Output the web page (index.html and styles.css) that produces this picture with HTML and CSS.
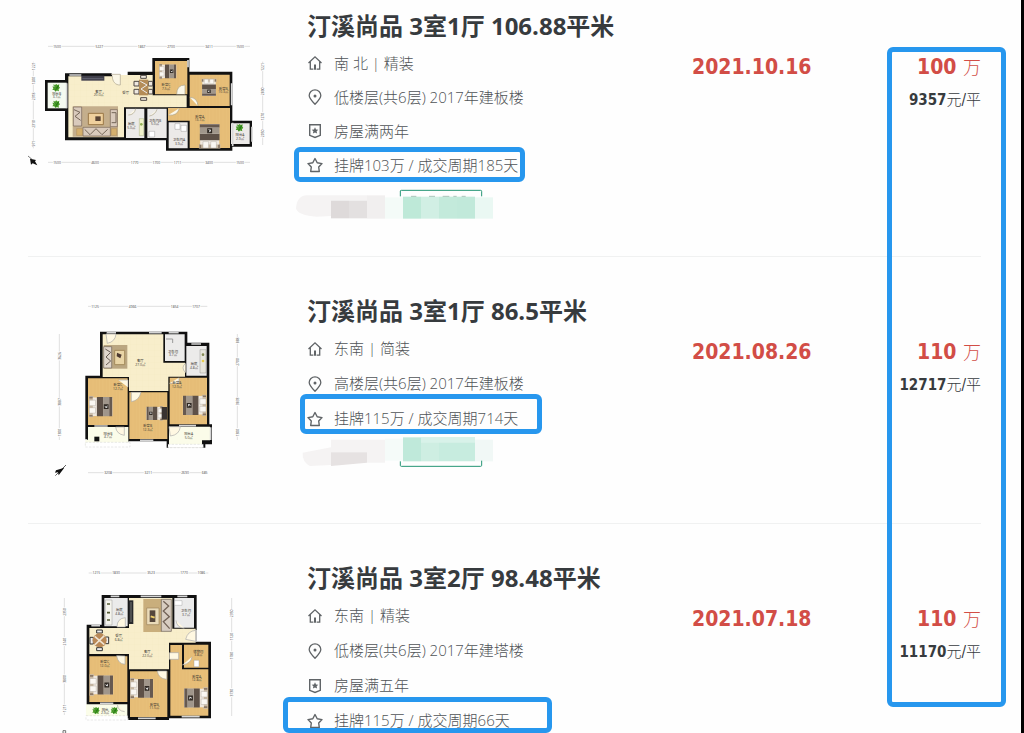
FILE: index.html
```html
<!DOCTYPE html>
<html lang="zh-CN">
<head>
<meta charset="utf-8">
<meta name="viewport" content="width=device-width, initial-scale=1">
<title>汀溪尚品 成交记录</title>
<link rel="stylesheet" href="styles.css">
</head>
<body>
<svg class="defs" aria-hidden="true">
  <defs>
    <pattern id="wood" width="10" height="24" patternUnits="userSpaceOnUse"><rect width="10" height="24" fill="#e8c07a"/><path d="M0 0V24M5 0V24" stroke="#dcb066" stroke-width="1"/></pattern>
    <pattern id="tile" width="18" height="18" patternUnits="userSpaceOnUse"><rect width="18" height="18" fill="#f8eecb"/><path d="M0 0H18M0 0V18" stroke="#f1e4bc" stroke-width="1"/></pattern>
    <symbol id="i-home" viewBox="0 0 16 16"><path d="M1.500 8 8 1.800 14.500 8M3.300 6.800V14.200H6.400M12.700 6.800V14.200H9.600" fill="none" stroke="currentColor" stroke-width="1.300"/><path d="M7 9.500H9V14.800H7Z" fill="currentColor"/></symbol>
    <symbol id="i-pin" viewBox="0 0 16 16"><path d="M8 15.300C4.500 11.700 2.200 9.300 2.200 6.500A5.800 5.700 0 0 1 13.800 6.500C13.800 9.300 11.500 11.700 8 15.300Z" fill="none" stroke="currentColor" stroke-width="1.300"/><circle cx="8" cy="7" r="1.500" fill="currentColor"/></symbol>
    <symbol id="i-badge" viewBox="0 0 16 16"><path d="M2.700 1.700H13.300V12.300L8 14.500 2.700 12.300Z" fill="none" stroke="currentColor" stroke-width="1.400"/><path d="m8 4.300 1 2.200 2.300.200-1.700 1.600.5 2.300L8 9.400l-2.100 1.200.5-2.300-1.700-1.600L7 6.500Z" fill="currentColor"/></symbol>
    <symbol id="i-star" viewBox="0 0 16 16"><path d="M8 1.500 10.200 5.700 15 6.600 11.700 10 12.300 14.500H3.700L4.300 10 1 6.600 5.800 5.700Z" fill="none" stroke="currentColor" stroke-width="1.400" stroke-linejoin="round"/></symbol>
    <symbol id="bed" viewBox="0 0 70 62"><path d="M0 0H14V62H0Z" fill="#cbbba5"/><path d="M2 2h10v5H2zM2 55h10v5H2z" fill="#8b7866"/><path d="M12 4H70V58H12Z" fill="#eee7de"/><path d="M2 12h18v16H2zM2 34h18v16H2z" fill="#faf7f2" stroke="#9e948b"/><path d="M24 3H42V59H24Z" fill="#5e5148"/><path d="M42 3H60V59H42Z" fill="#a0968b"/><path d="M60 3h9v56h-9z" fill="#665950"/><path d="M44 24h14v14H44z" fill="#2f2823"/><path d="m46 28 5 3 4-5-1 9-5-1z" fill="#ddd"/></symbol>
    <symbol id="plant" viewBox="0 0 24 24"><path d="M12 12 3 2l6 2 3-3 4 3 5-2-1 6 3 4-4 4 1 6-6-2-4 3-3-5-6 0 3-5-3-5 5 0z" fill="#499b27"/><path d="m5 5 8 8 5-7-4 9-6 4" stroke="#1d6f14" stroke-width="2" fill="none"/></symbol>
    <symbol id="north" viewBox="0 0 40 40"><path d="m12 10 18 7-10 4-3 9-9-15z" fill="#111" transform="rotate(45 20 20)"/><path d="m3 3 27 26" stroke="#111" stroke-width="2"/></symbol>
  </defs>
</svg>

<main class="page">
  <ul class="list">

    <li class="item">
      <svg class="plan" viewBox="24 -75 720 600" role="img" aria-label="户型图 3室1厅">
        <path d="M135 130H275V135H323V125H397V84H508V125H637V272H696V350H637V362H438V331H135V243H75V150H135Z" fill="#111"/>
        <path d="M83 158H140V235H83Z" fill="#f5faf0"/>
        <path d="M145 139H300V135H398V196H500V232H312V322H145Z" fill="url(#tile)"/>
        <path d="M405 93H502V193H405ZM509 134H629V228H509ZM509 234H630V354H509ZM444 234H509V272H444Z" fill="url(#wood)"/>
        <path d="M318 236H373V324H318ZM382 236H440V324H382ZM446 277H503V355H446ZM633 280H689V342H633Z" fill="#eceae8"/>
        <path d="M140 160v75M148 135H184M635 160V226M696 290V335M504 90v22M638 278v70" stroke="#d9d9d9" stroke-width="5"/>
        <path d="M184 137H253V152H184Z" fill="#41404b"/><path d="M187 146H250" stroke="#777887" stroke-width="2"/>
        <path d="M275 133H301V165C286 166 277 154 277 139M470 193Q470 165 495 165V193M509 202Q532 202 534 228M445 255Q472 259 478 235M325 255Q343 255 347 236M388 258Q405 255 411 238" fill="#fbf7e8" stroke="#aaa38c" stroke-width="2"/>
        <path d="M158 229H294V320H158Z" fill="#c4ae8c"/><path d="M160 231h25v57h-25zM271 239h21v51h-21zM189 292h82v26h-82z" fill="#d9cabc" stroke="#726256" stroke-width="2"/>
        <path d="m162 239 18 8-15 12 17 12M275 248h13v30h-13M194 298l16 16 18-18 18 18 17-16" fill="none" stroke="#756658" stroke-width="3"/>
        <path d="M205 250H250V284H205Z" fill="#efd09d" stroke="#997747" stroke-width="3"/><path d="M226 259h16v14h-16z" fill="#594435"/><path d="M170 296h17v20h-17zM274 296h16v20h-16z" fill="#d5b06e" stroke="#a47c41"/>
        <path d="M342 154h15v14h-15zM342 178h15v14h-15zM385 154h13v14h-13zM385 178h13v14h-13zM362 136h17v9h-17zM362 203h18v8h-18z" fill="#eee8df" stroke="#4e4743" stroke-width="3"/>
        <path d="M357 149h28v47h-28z" fill="#b48c57"/><path d="m361 154 20 11-18 12 18 12" stroke="#eee" stroke-width="3" fill="none"/>
        <use href="#bed" x="405" y="101" width="76" height="46"/>
        <use href="#bed" width="76" height="46" transform="translate(590 134) rotate(90)"/>
        <use href="#bed" width="74" height="66" transform="translate(536 356) rotate(-90)"/>
        <path d="M358 266h13v51h-13z" fill="#f1f2cb" stroke="#85965d"/><circle cx="364" cy="283" r="4" fill="#92b154"/><path d="M387 304h17v17h-17zM465 281h15v17h-15zM483 286h17v18h-17z" fill="#fff" stroke="#777"/>
        <use href="#plant" x="96" y="161" width="25" height="25"/><use href="#plant" x="96" y="210" width="25" height="25"/><use href="#plant" x="646" y="281" width="25" height="25"/>
        <g class="room"><text x="236" y="188">客厅</text><text x="236" y="199">20.0㎡</text><text x="317" y="192">餐厅</text><text x="110" y="195">阳台B</text><text x="110" y="205">3.7㎡</text><text x="438" y="169">卧室C</text><text x="438" y="179">7.5㎡</text><text x="610" y="180">卧室B</text><text x="610" y="190">10.3㎡</text><text x="539" y="263">卧室A</text><text x="539" y="273">13.7㎡</text><text x="334" y="285">厨房</text><text x="334" y="296">5.0㎡</text><text x="405" y="275">卫生间B</text><text x="405" y="286">5.0㎡</text><text x="477" y="334">卫生间A</text><text x="477" y="345">3.9㎡</text><text x="660" y="318">阳台A</text><text x="660" y="329">2.9㎡</text></g>
        <path class="rule" d="M84 49H690M84 397H690M40 95V355M728 95V345"/>
        <g class="dim"><text x="111" y="53">1500</text><text x="238" y="53">5227</text><text x="365" y="53">1867</text><text x="453" y="53">2700</text><text x="567" y="53">3411</text><text x="660" y="53">1500</text><text x="111" y="401">1500</text><text x="225" y="401">4600</text><text x="344" y="401">1770</text><text x="409" y="401">1700</text><text x="473" y="401">1711</text><text x="567" y="401">3400</text><text x="660" y="401">1500</text><text transform="translate(44 109) rotate(-90)">1221</text><text transform="translate(44 152) rotate(-90)">1200</text><text transform="translate(44 199) rotate(-90)">2318</text><text transform="translate(44 282) rotate(-90)">2310</text><text transform="translate(44 341) rotate(-90)">971</text><text transform="translate(732 111) rotate(-90)">1221</text><text transform="translate(732 184) rotate(-90)">2890</text><text transform="translate(732 260) rotate(-90)">1270</text><text transform="translate(732 310) rotate(-90)">2050</text></g>
        <path d="m30 386 18 4-3 4 7 12-14-6-5 4z" fill="#111"/><path d="m24 378 12 10" stroke="#333" stroke-width="2"/>
      </svg>
      <div class="info">
        <h2 class="title">汀溪尚品 3室1厅 106.88平米</h2>
        <ul class="facts">
          <li class="fact"><svg class="icon"><use href="#i-home"/></svg>南 北 | 精装</li>
          <li class="fact"><svg class="icon"><use href="#i-pin"/></svg>低楼层(共6层) 2017年建板楼</li>
          <li class="fact"><svg class="icon"><use href="#i-badge"/></svg>房屋满两年</li>
          <li class="fact"><svg class="icon"><use href="#i-star"/></svg>挂牌103万 / 成交周期185天<span class="mark mark-a"></span></li>
        </ul>
        <svg class="tags" viewBox="48 228 600 108" aria-hidden="true">
          <path d="M361 259V243Q361 241 364 241H602Q605 241 605 244V259" fill="none" stroke="#249574" stroke-width="3"/>
          <path d="M80 256H262V272H153V318L110 320Q55 316 48 296Q50 258 80 256Z" fill="#f5f3f3"/><path d="M153 272H207V325H153Z" fill="#dedada"/><path d="M207 272H261V325H207Z" fill="#e3e0e0"/><path d="M261 256H315V326H261Z" fill="#f1efef"/><path d="M315 262H369V326H315Z" fill="#f4fbf8"/><path d="M369 260H423V326H369Z" fill="#bee9d8"/><path d="M423 260H477V326H423Z" fill="#d1efe4"/><path d="M477 260H531V326H477Z" fill="#c3eadb"/><path d="M531 260H585V326H531Z" fill="#c1e9da"/><path d="M585 262H639V326H585Z" fill="#eaf8f3"/>
          <path d="M393 259h16M447 259h18M488 259h20M520 259h10M545 259h12" stroke="#86ab9d" stroke-width="2"/>
        </svg>
      </div>
      <div class="deal">
        <time class="date" datetime="2021-10-16">2021.10.16</time>
        <div class="price"><div class="total"><strong>100</strong> <span>万</span></div><div class="unit"><strong>9357</strong>元/平</div></div>
      </div>
    </li>

    <li class="item">
      <svg class="plan" viewBox="-36 0 720 600" role="img" aria-label="户型图 3室1厅">
        <path d="M180 125H442V158H508V403H516V463H496V473H380V454H265V461H142V448H136V257H180Z" fill="#111"/>
        <path d="M188 133H370V218H435V260H385V303H267V261H188Z" fill="url(#tile)"/>
        <path d="M144 265H263V405H144ZM268 307H382V447H268ZM389 263H501V403H389Z" fill="url(#wood)"/>
        <path d="M375 133H434V213H375ZM439 168H500V257H439Z" fill="#ecebea"/><path d="M144 411H265V471H136V450H144ZM387 410H510V451H486V473H387Z" fill="#fbfce9"/>
        <path d="M200 128h28M327 128h38M386 128h30M454 162h29M163 408h40M417 407h51M300 451h40M512 412v38" stroke="#d4d4d4" stroke-width="5"/>
        <path d="M136 457H270V471H136ZM384 463H490V473H384Z" fill="#fff" stroke="#bbb" stroke-dasharray="7 4"/>
        <path d="M198 132H228Q226 155 202 160ZM274 335V307H303Q297 332 274 335ZM387 410H421Q418 435 391 438ZM227 411Q229 432 253 436V411ZM235 270H264V292M388 280H417V263M437 220Q421 233 437 248" fill="#fff8e2" stroke="#aaa" stroke-width="2"/>
        <path d="M191 165H262V236H191Z" fill="#baa681"/><path d="M191 170h24v64h-24z" fill="#e1d7cd" stroke="#6e6257" stroke-width="2"/><path d="m196 177 16 10-14 14 14 12-14 12" fill="none" stroke="#665b53" stroke-width="3"/><path d="M224 181H254V224H224Z" fill="#e9d5a6" stroke="#a48b5c" stroke-width="3"/><path d="m231 188 14 6-4 11-11-6z" fill="#4d3a31"/>
        <use href="#bed" x="146" y="317" width="72" height="66"/>
        <use href="#bed" width="78" height="44" transform="translate(383 392) rotate(180)"/>
        <use href="#bed" width="72" height="66" transform="translate(500 379) rotate(180)"/>
        <path d="M365 351h16v38h-16z" fill="#393331"/><path d="M163 440H178V454H163Z" fill="#111"/><path d="M378 147h20v12" fill="none" stroke="#999" stroke-width="3"/><path d="M480 179h18v70h-18z" fill="#e7e5dc" stroke="#777"/><circle cx="489" cy="194" r="4" fill="#848a52"/><circle cx="489" cy="213" r="4" fill="#e7cc4c"/>
        <g class="room"><text x="301" y="216">客厅</text><text x="301" y="228">27.0㎡</text><text x="399" y="189">卫生间</text><text x="399" y="199">3.7㎡</text><text x="462" y="225">厨房</text><text x="462" y="237">4.8㎡</text><text x="234" y="289">卧室C</text><text x="234" y="300">12.7㎡</text><text x="411" y="283">卧室A</text><text x="411" y="294">12.0㎡</text><text x="323" y="411">卧室B</text><text x="323" y="422">12.3㎡</text><text x="204" y="434">阳台B</text><text x="204" y="445">4.7㎡</text><text x="446" y="435">阳台A</text><text x="446" y="446">5.0㎡</text></g>
        <path class="rule" d="M144 49H502M144 548H504M58 132V450M592 132V450"/>
        <g class="dim"><text x="165" y="53">1125</text><text x="278" y="53">4966</text><text x="404" y="53">1854</text><text x="468" y="53">1707</text><text x="204" y="552">3208</text><text x="325" y="552">3211</text><text x="435" y="552">2690</text><text x="494" y="552">685</text><text transform="translate(62 198) rotate(-90)">3626</text><text transform="translate(62 336) rotate(-90)">3887</text><text transform="translate(62 428) rotate(-90)">1300</text><text transform="translate(596 151) rotate(-90)">888</text><text transform="translate(596 216) rotate(-90)">2700</text><text transform="translate(596 334) rotate(-90)">3833</text><text transform="translate(596 428) rotate(-90)">1300</text></g>
        <path d="m48 541 25-8-17 23-2-9-9 1z" fill="#111"/><path d="m46 557 32-32" stroke="#111" stroke-width="2"/>
      </svg>
      <div class="info">
        <h2 class="title">汀溪尚品 3室1厅 86.5平米</h2>
        <ul class="facts">
          <li class="fact"><svg class="icon"><use href="#i-home"/></svg>东南 | 简装</li>
          <li class="fact"><svg class="icon"><use href="#i-pin"/></svg>高楼层(共6层) 2017年建板楼</li>
          <li class="fact"><svg class="icon"><use href="#i-star"/></svg>挂牌115万 / 成交周期714天<span class="mark mark-b"></span></li>
        </ul>
        <svg class="tags" viewBox="48 438 600 108" aria-hidden="true">
          <path d="M153 449H315V518H261V487H153V525L90 528Q66 515 68 488L153 472Z" fill="#f5f3f3"/><path d="M153 487H261V518L153 528Z" fill="#e6e2e2"/><path d="M315 446H369V512H315Z" fill="#f5fbf9"/><path d="M369 442H423V514H369Z" fill="#bfe9da"/><path d="M423 442H477V514H423Z" fill="#ceeee2"/><path d="M477 442H585V514H477Z" fill="#c7ecdf"/><path d="M423 442H585V458H423Z" fill="#d8f2e9"/><path d="M585 449H639V514H585Z" fill="#f1f8f6"/>
          <path d="M361 514V526Q361 529 364 529H602Q605 529 605 526V512" fill="none" stroke="#249574" stroke-width="3"/>
        </svg>
      </div>
      <div class="deal">
        <time class="date" datetime="2021-08-26">2021.08.26</time>
        <div class="price"><div class="total"><strong>110</strong> <span>万</span></div><div class="unit"><strong>12717</strong>元/平</div></div>
      </div>
    </li>

    <li class="item">
      <svg class="plan" viewBox="-66 -9 720 600" role="img" aria-label="户型图 3室2厅">
        <path d="M155 105H440V245H483V475H357V480H235V475H110V194H155Z" fill="#111"/>
        <path d="M118 204H237V114H367V206H437V248H357V328H237V282H118Z" fill="url(#tile)"/>
        <path d="M118 289H232V426H118ZM240 334H352V471H240ZM361 255H396V328H475V467H361ZM402 254H475V323H402Z" fill="url(#wood)"/>
        <path d="M163 114H233V199H163ZM373 114H432V203H373Z" fill="#ebebeb"/><path d="M108 433H232V479H108Z" fill="#fbfde9"/>
        <path d="M272 109h62M182 109h26M382 109h30M124 197h26M150 430h40M264 475h53M395 470h54M438 210v36" stroke="#d5d5d5" stroke-width="5"/>
        <path d="M108 467H233V480H108Z" fill="#fff" stroke="#bbb" stroke-dasharray="7 4"/>
        <path d="M201 201Q201 175 226 173V201ZM403 205Q380 203 378 181M407 238Q413 213 437 211V244ZM200 287Q203 311 225 313V288ZM322 333Q325 356 350 358V333ZM358 278h28v20h-28M397 315Q424 310 426 290M202 433Q203 453 224 455" fill="#fff8e2" stroke="#aaa" stroke-width="2"/>
        <path d="M236 121H250V192H236Z" fill="#27282b"/><path d="M243 126v60" stroke="#777" stroke-width="3"/>
        <path d="M280 117H335V216H280Z" fill="#c9ae7c"/><path d="M290 144h37v50h-37z" fill="#eadbb9" stroke="#9c845b" stroke-width="2"/><path d="M299 151h17v35h-17z" fill="#56473c"/><path d="m302 169 12 4" stroke="#efce68" stroke-width="6"/>
        <path d="M334 118h30v96h-30z" fill="#d8cdc1" stroke="#655b52" stroke-width="2"/><path d="m340 124 16 14-16 15 18 17-18 15 19 21" fill="none" stroke="#736357" stroke-width="4"/>
        <path d="M140 210h17v9h-17zM140 263h17v9h-17zM120 232h10v20h-10zM166 231h10v20h-10z" fill="#eee" stroke="#333" stroke-width="3"/><circle cx="149" cy="241" r="21" fill="#b98856"/><path d="m134 229 29 25M134 255l29-28" stroke="#efe4d3" stroke-width="5"/>
        <use href="#bed" x="118" y="342" width="72" height="66"/><use href="#bed" x="240" y="352" width="70" height="66"/><use href="#bed" width="72" height="68" transform="translate(474 448) rotate(180)"/>
        <path d="M166 120h20v75h-20z" fill="#f6f5ee" stroke="#777"/><path d="M171 132h9M171 158h9M171 180h9" stroke="#555b35" stroke-width="5"/><path d="M374 122h22v14h-22zM432 301h15v19h-15z" fill="#fff" stroke="#888"/>
        <use href="#plant" x="126" y="440" width="24" height="24"/><use href="#plant" x="181" y="440" width="24" height="24"/>
        <g class="room"><text x="208" y="153">厨房</text><text x="208" y="165">4.8㎡</text><text x="408" y="157">卫生间</text><text x="408" y="168">3.7㎡</text><text x="206" y="232">餐厅</text><text x="206" y="243">6.8㎡</text><text x="292" y="278">客厅</text><text x="292" y="290">22.0㎡</text><text x="164" y="310">卧室C</text><text x="164" y="321">12.0㎡</text><text x="445" y="278">储物间</text><text x="445" y="289">3.8㎡</text><text x="440" y="353">卧室A</text><text x="440" y="364">12.8㎡</text><text x="313" y="437">卧室B</text><text x="313" y="448">11.5㎡</text><text x="165" y="452">阳台</text><text x="165" y="463">2.9㎡</text></g>
        <path class="rule" d="M116 39H475M43 114V465M545 114V468"/>
        <g class="dim"><text x="139" y="43">1215</text><text x="198" y="43">1830</text><text x="303" y="43">3523</text><text x="402" y="43">1770</text><text x="454" y="43">1086</text><text transform="translate(47 156) rotate(-90)">2350</text><text transform="translate(47 245) rotate(-90)">2140</text><text transform="translate(47 357) rotate(-90)">3800</text><text transform="translate(47 445) rotate(-90)">1211</text><text transform="translate(549 160) rotate(-90)">2350</text><text transform="translate(549 230) rotate(-90)">1120</text><text transform="translate(549 287) rotate(-90)">1780</text><text transform="translate(549 398) rotate(-90)">3730</text></g>
        <path d="M39 512h8v8h-8z" fill="none" stroke="#333" stroke-width="2"/>
      </svg>
      <div class="info">
        <h2 class="title">汀溪尚品 3室2厅 98.48平米</h2>
        <ul class="facts">
          <li class="fact"><svg class="icon"><use href="#i-home"/></svg>东南 | 精装</li>
          <li class="fact"><svg class="icon"><use href="#i-pin"/></svg>低楼层(共6层) 2017年建塔楼</li>
          <li class="fact"><svg class="icon"><use href="#i-badge"/></svg>房屋满五年</li>
          <li class="fact"><svg class="icon"><use href="#i-star"/></svg>挂牌115万 / 成交周期66天<span class="mark mark-c"></span></li>
        </ul>
      </div>
      <div class="deal">
        <time class="date" datetime="2021-07-18">2021.07.18</time>
        <div class="price"><div class="total"><strong>110</strong> <span>万</span></div><div class="unit"><strong>11170</strong>元/平</div></div>
      </div>
    </li>
  </ul>
  <div class="mark mark-prices"></div>
</main>
</body>
</html>
```
FILE: styles.css
```css
* { box-sizing: border-box; }

body {
  margin: 0;
  background: #fefefe;
  color: #505457;
  font: 15px/35px "Open Sans", "Noto Sans CJK SC", sans-serif;
}

ul { list-style: none; margin: 0; padding: 0; }

.defs { position: absolute; width: 0; height: 0; }

.page {
  position: relative;
  height: 100vh;
  overflow: hidden;
  border-right: 3px solid #000;
}

.list { padding: 0 40px 0 28px; }

.item {
  display: grid;
  grid-template-columns: 240px minmax(0, 1fr) 289px;
  column-gap: 39px;
  padding: 33px 0;
  border-bottom: 1px solid #f0f1f1;
}

.item:first-child { padding: 5px 0 34px; }

.plan { display: block; width: 240px; height: 200px; }

.room, .dim {
  font-family: "Open Sans", "Noto Sans CJK SC", sans-serif;
  font-size: 10px;
  line-height: 1;
  text-anchor: middle;
}

.room { fill: #3c3832; }
.dim { fill: #444; paint-order: stroke; stroke: #fefefe; stroke-width: 5px; }
.rule { fill: none; stroke: #a5a5a5; stroke-width: 1px; }

.info { padding-top: 6px; }

.title {
  margin: 0 0 5px;
  color: #373b3e;
  font-size: 24px;
  font-weight: 700;
  line-height: 30px;
  white-space: nowrap;
}

.fact {
  position: relative;
  display: flex;
  align-items: center;
  gap: 11px;
  height: 35px;
  font-weight: 300;
  line-height: 33px;
  white-space: nowrap;
}

.item:first-child .fact { height: 34px; }
.item:first-child .facts { padding-bottom: 4px; }

.icon { flex: none; width: 16px; height: 16px; color: #606467; }

.tags { display: block; width: 200px; height: 36px; margin-left: -11px; }

.deal {
  display: flex;
  justify-content: space-between;
  padding-top: 46px;
  line-height: 33px;
}

.date, .total {
  color: #d24d46;
  font-family: "DejaVu Sans Condensed", "Noto Sans CJK SC", sans-serif;
  font-size: 21px;
  font-weight: 700;
}

.price { text-align: right; }
.total span { font-size: 18px; font-weight: 300; }

.unit {
  color: #373b3e;
  font-family: "DejaVu Sans Condensed", "Noto Sans CJK SC", sans-serif;
  font-weight: 300;
}

.unit strong { font-weight: 700; }

/* highlight frames lying over the list */
.mark {
  position: absolute;
  border: 5px solid #2797ee;
  border-radius: 6px;
  pointer-events: none;
}

.mark-a { left: -13px; top: -1px; width: 231px; height: 35px; }
.mark-b { left: -7px; top: -7px; width: 242px; height: 40px; }
.mark-c { left: -24px; top: -6px; width: 269px; height: 36px; }
.mark-prices { right: 15px; top: 47px; width: 119px; height: 660px; }
```
